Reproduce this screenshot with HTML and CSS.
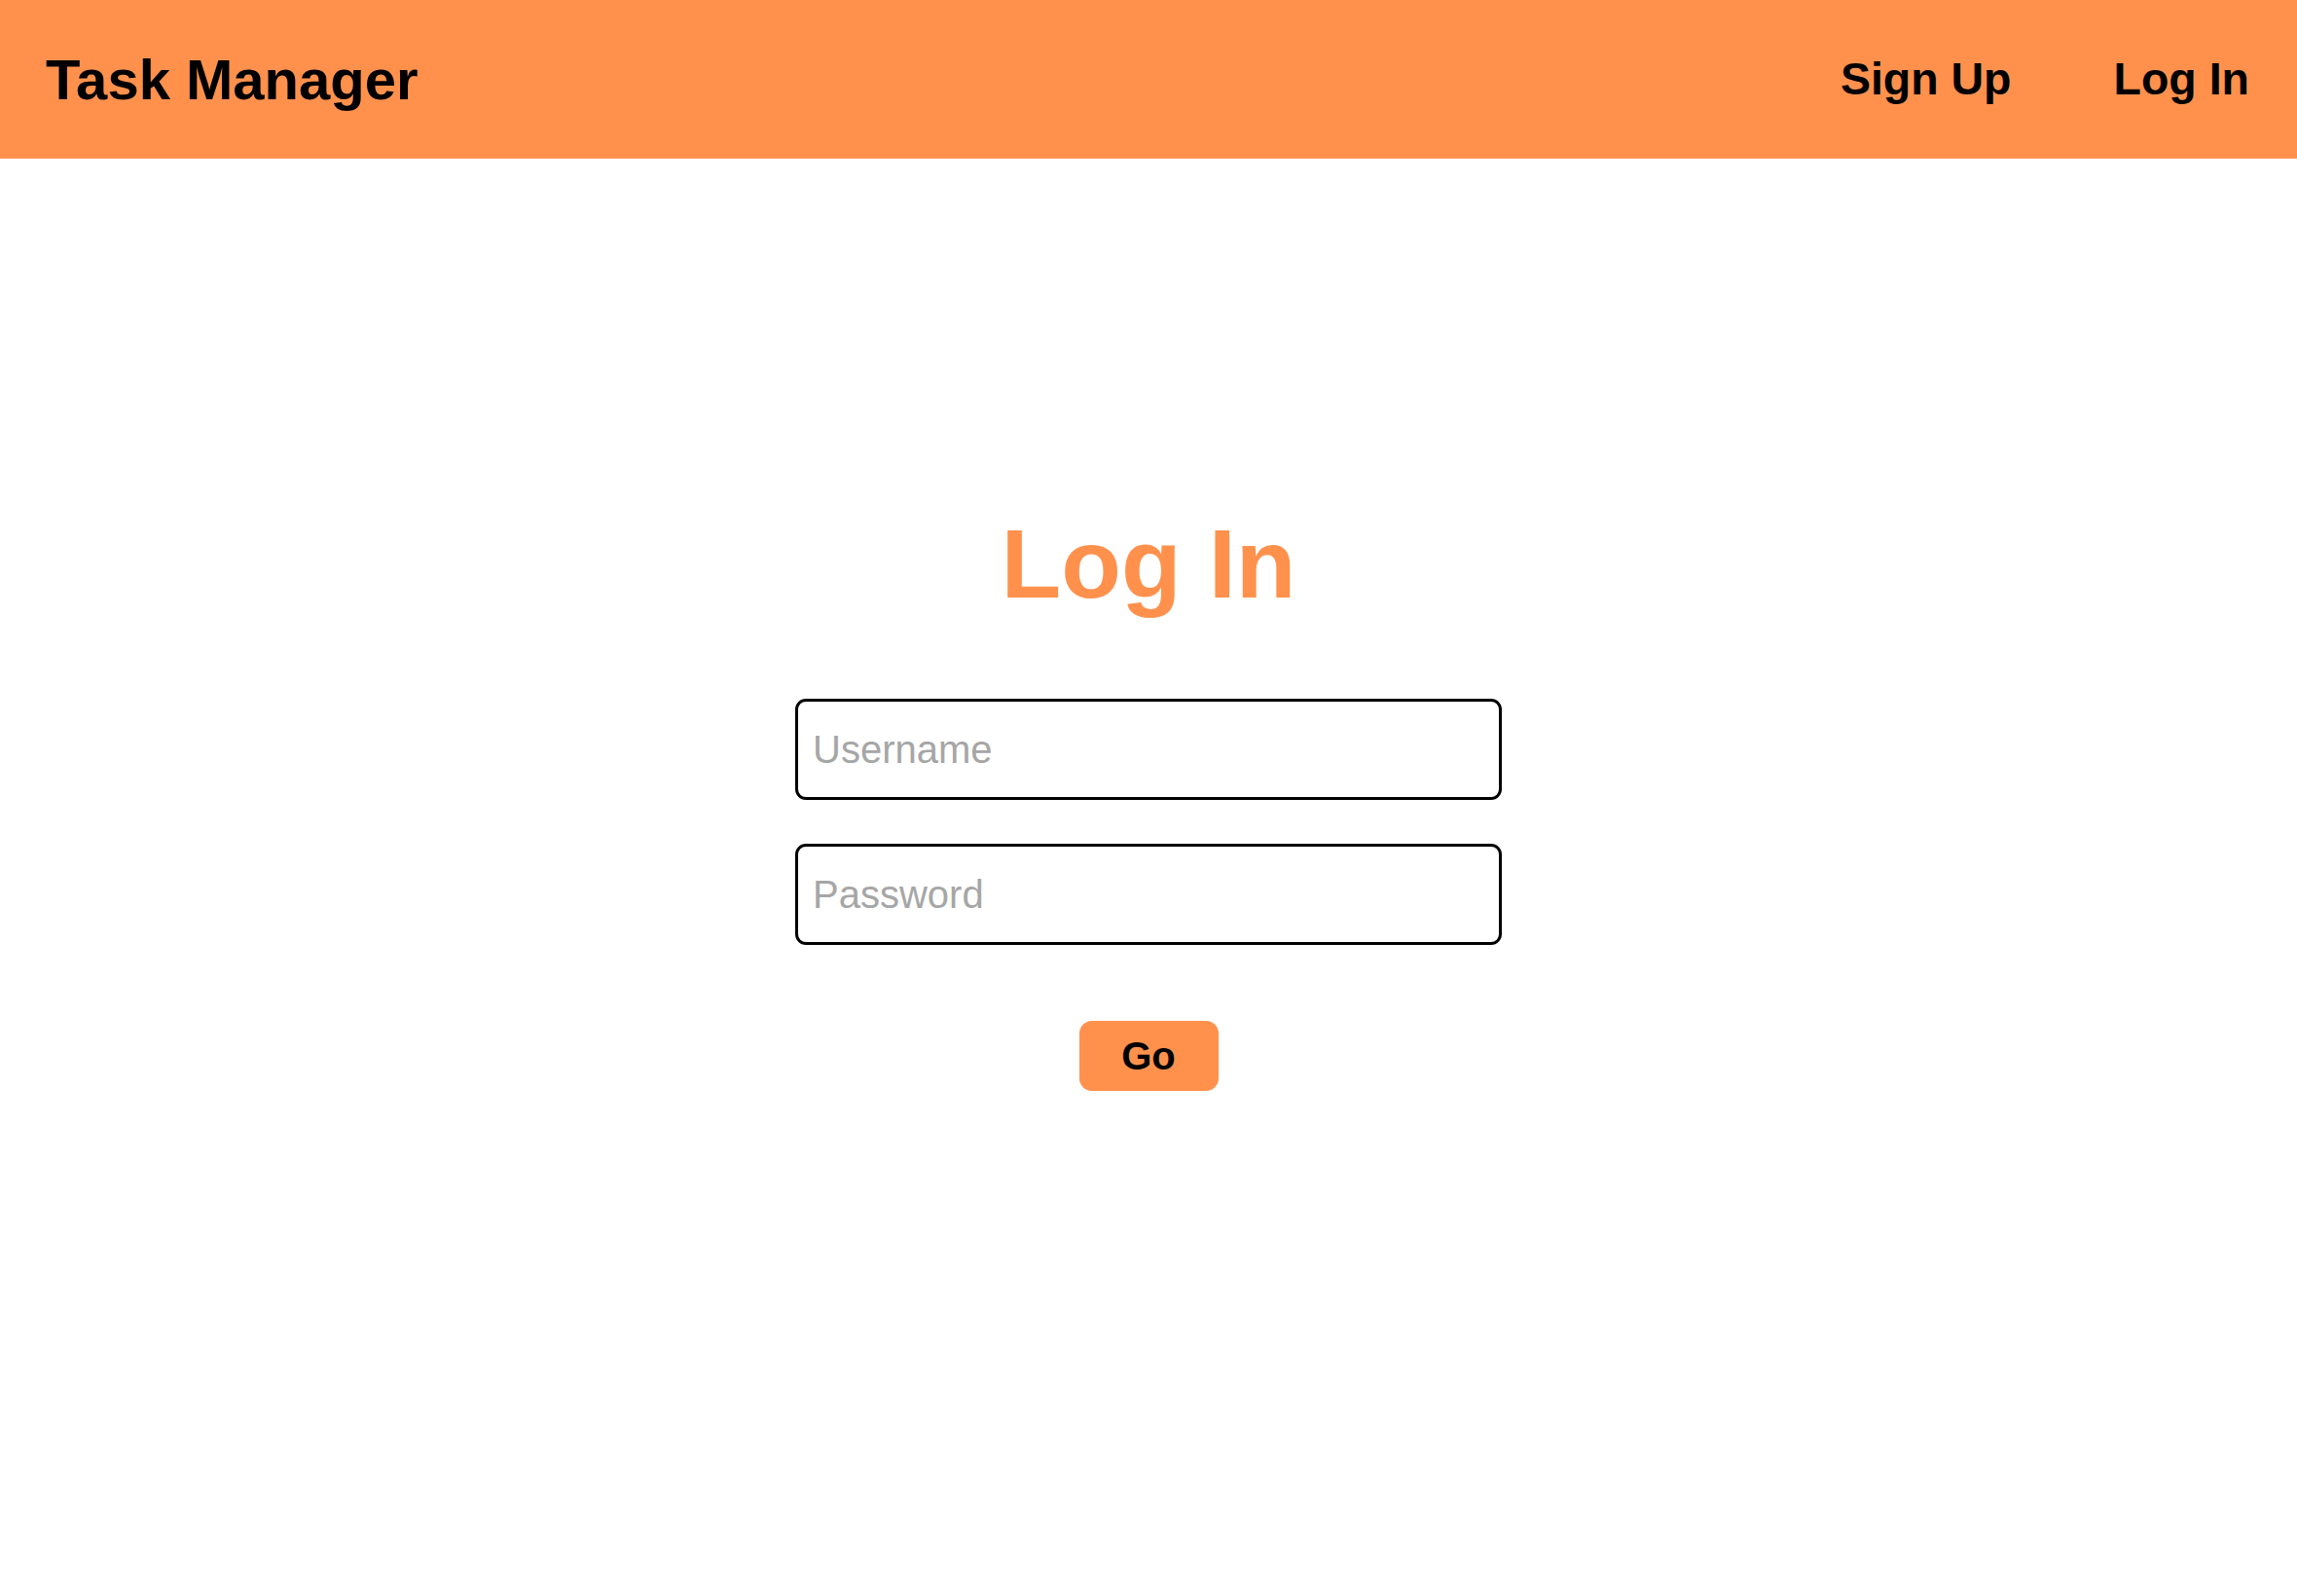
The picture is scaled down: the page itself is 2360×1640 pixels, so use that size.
FILE: index.html
```html
<!DOCTYPE html>
<html lang="en">
<head>
<meta charset="utf-8">
<title>Task Manager - Log In</title>
<link rel="stylesheet" href="styles.css">
</head>
<body>
<header class="topbar">
  <div class="brand">Task Manager</div>
  <nav class="nav">
    <a class="nav-link" href="#">Sign Up</a>
    <a class="nav-link" href="#">Log In</a>
  </nav>
</header>
<main class="main">
  <h1 class="title">Log In</h1>
  <form class="login-form">
    <input class="field" type="text" placeholder="Username">
    <input class="field field-password" type="password" placeholder="Password">
    <button class="go-btn" type="button">Go</button>
  </form>
</main>
</body>
</html>
```
FILE: styles.css
```css
html, body {
  margin: 0;
  padding: 0;
  background: #ffffff;
  font-family: "Liberation Sans", Arial, sans-serif;
}

.topbar {
  height: 163px;
  background: #ff914d;
  display: flex;
  align-items: center;
  justify-content: space-between;
  padding: 0 49px 0 47px;
  box-sizing: border-box;
}

.brand {
  font-size: 58px;
  font-weight: 700;
  color: #000;
  line-height: 1;
}

.nav {
  display: flex;
  gap: 105px;
  align-items: center;
}

.nav-link {
  font-size: 46.5px;
  font-weight: 700;
  color: #000;
  text-decoration: none;
  line-height: 1;
}

.main {
  display: flex;
  flex-direction: column;
  align-items: center;
  padding-top: 365px;
}

.title {
  margin: 0;
  font-size: 101px;
  line-height: 102px;
  font-weight: 700;
  color: #ff914d;
}

.login-form {
  display: flex;
  flex-direction: column;
  align-items: center;
  margin-top: 88px;
}

.field {
  width: 726px;
  height: 104px;
  box-sizing: border-box;
  border: 3px solid #000;
  border-radius: 11px;
  padding: 0 15px;
  font-family: "Liberation Sans", Arial, sans-serif;
  font-size: 40px;
  color: #000;
  background: #fff;
  outline: none;
}

.field::placeholder {
  color: #a6a6a6;
}

.field-password {
  margin-top: 45px;
}

.go-btn {
  margin-top: 78px;
  width: 143px;
  height: 72px;
  border: none;
  border-radius: 13px;
  background: #ff914d;
  color: #000;
  font-family: "Liberation Sans", Arial, sans-serif;
  font-size: 40px;
  font-weight: 700;
  padding: 0;
  cursor: pointer;
}
```
